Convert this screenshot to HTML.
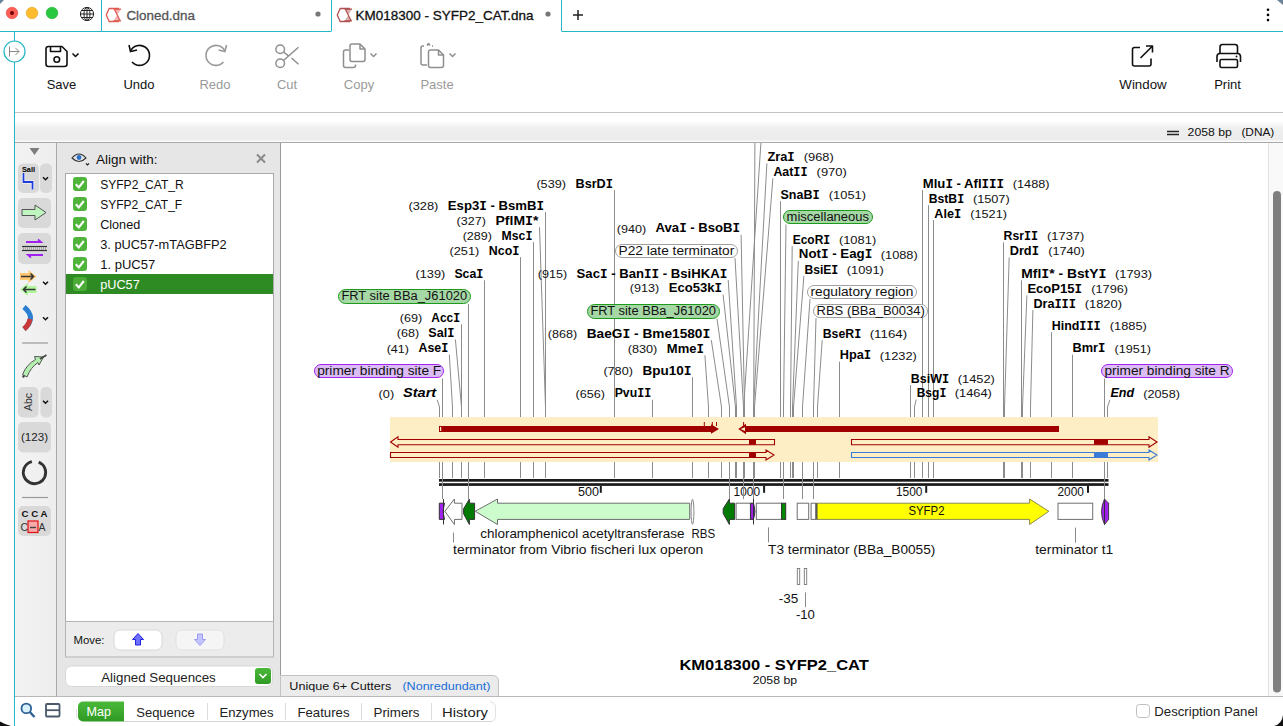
<!DOCTYPE html>
<html><head><meta charset="utf-8"><style>
html,body{margin:0;padding:0;width:1283px;height:726px;overflow:hidden;background:#fff}
svg{display:block}
text{font-family:"Liberation Sans",sans-serif}
</style></head><body>
<svg width="1283" height="726" viewBox="0 0 1283 726">
<rect x="0.00" y="0.00" width="1283.00" height="726.00" fill="#ffffff" stroke="none" stroke-width="1" rx="0"/>
<defs><linearGradient id="gs" x1="0" y1="0" x2="0" y2="1"><stop offset="0" stop-color="#ffffff"/><stop offset="0.27" stop-color="#ffffff"/><stop offset="0.5" stop-color="#efefef"/><stop offset="0.9" stop-color="#ececec"/><stop offset="0.93" stop-color="#fafafa"/><stop offset="1" stop-color="#f6f6f6"/></linearGradient><linearGradient id="gl" x1="0" y1="0" x2="1" y2="0"><stop offset="0" stop-color="#f3f3f3"/><stop offset="1" stop-color="#eeeeee"/></linearGradient><linearGradient id="gg" x1="0" y1="0" x2="0" y2="1"><stop offset="0" stop-color="#4cb83a"/><stop offset="1" stop-color="#2f9a23"/></linearGradient></defs>
<rect x="15.00" y="113.00" width="1268.00" height="30.00" fill="url(#gs)" stroke="none" stroke-width="1" rx="0"/>
<line x1="15.00" y1="112.50" x2="1283.00" y2="112.50" stroke="#c4c4c4" stroke-width="1"/>
<line x1="15.00" y1="142.50" x2="1283.00" y2="142.50" stroke="#a9a9a9" stroke-width="1"/>
<rect x="15.00" y="143.00" width="41.00" height="553.00" fill="url(#gl)" stroke="none" stroke-width="1" rx="0"/>
<line x1="56.50" y1="143.00" x2="56.50" y2="696.00" stroke="#a8a8a8" stroke-width="1"/>
<line x1="57.50" y1="143.00" x2="57.50" y2="696.00" stroke="#f0f0f0" stroke-width="1"/>
<rect x="57.00" y="143.00" width="223.00" height="553.00" fill="#e6e6e6" stroke="none" stroke-width="1" rx="0"/>
<line x1="280.50" y1="143.00" x2="280.50" y2="696.00" stroke="#9a9a9a" stroke-width="1"/>
<rect x="281.00" y="143.00" width="988.00" height="553.00" fill="#ffffff" stroke="none" stroke-width="1" rx="0"/>
<rect x="1269.00" y="143.00" width="14.00" height="553.00" fill="#f9f9f9" stroke="none" stroke-width="1" rx="0"/>
<line x1="1268.50" y1="143.00" x2="1268.50" y2="696.00" stroke="#e2e2e2" stroke-width="1"/>
<rect x="1273.00" y="191.00" width="8.00" height="501.50" fill="#7f7f7f" stroke="none" stroke-width="1" rx="4"/>
<line x1="15.00" y1="696.50" x2="1283.00" y2="696.50" stroke="#b8b8b8" stroke-width="1"/>
<circle cx="12" cy="13" r="5.8" fill="#ff5f57" stroke="#e0443e" stroke-width="0.6"/>
<circle cx="32" cy="13" r="5.8" fill="#febc2e" stroke="#dea123" stroke-width="0.6"/>
<circle cx="52" cy="13" r="5.8" fill="#28c840" stroke="#1aab29" stroke-width="0.6"/>
<circle cx="12" cy="13" r="2" fill="#6b0000"/>
<g transform="translate(87,14)" fill="none" stroke="#222" stroke-width="1"><circle r="6.6"/><ellipse rx="3" ry="6.6"/><line x1="-6.6" y1="0" x2="6.6" y2="0"/><line x1="-5.6" y1="-3.5" x2="5.6" y2="-3.5"/><line x1="-5.6" y1="3.5" x2="5.6" y2="3.5"/><line x1="0" y1="-6.6" x2="0" y2="6.6"/></g>
<line x1="101.50" y1="0.00" x2="101.50" y2="31.00" stroke="#25b7c6" stroke-width="1"/>
<line x1="331.50" y1="0.00" x2="331.50" y2="31.00" stroke="#25b7c6" stroke-width="1"/>
<line x1="561.50" y1="0.00" x2="561.50" y2="31.00" stroke="#25b7c6" stroke-width="1"/>
<line x1="0.00" y1="31.50" x2="331.50" y2="31.50" stroke="#25b7c6" stroke-width="1"/>
<line x1="561.50" y1="31.50" x2="1283.00" y2="31.50" stroke="#25b7c6" stroke-width="1"/>
<g transform="translate(106,8)"><path d="M13,0.5 H3.2 L0.3,7 L3.2,13.5 H13" fill="none" stroke="#e05a52" stroke-width="1.3"/><path d="M7.5,1 H15 L11.3,7 L15,13 H7.5 L11.2,7 Z" fill="#e05a52" opacity="0.45"/><path d="M7.5,1.2 H15 M7.5,12.8 H15 M8.5,1.5 L14,12.5" stroke="#e05a52" stroke-width="1.2"/></g>
<text x="126.4" y="20.0" font-size="13" fill="#555" textLength="68.5" lengthAdjust="spacingAndGlyphs" stroke="#555" stroke-width="0.3">Cloned.dna</text>
<circle cx="318" cy="14" r="2.6" fill="#777"/>
<g transform="translate(337,8)"><path d="M13,0.5 H3.2 L0.3,7 L3.2,13.5 H13" fill="none" stroke="#b05050" stroke-width="1.3"/><path d="M7.5,1 H15 L11.3,7 L15,13 H7.5 L11.2,7 Z" fill="#b05050" opacity="0.45"/><path d="M7.5,1.2 H15 M7.5,12.8 H15 M8.5,1.5 L14,12.5" stroke="#b05050" stroke-width="1.2"/></g>
<text x="355.6" y="20.0" font-size="13" fill="#111" textLength="178.0" lengthAdjust="spacingAndGlyphs" stroke="#111" stroke-width="0.3">KM018300 - SYFP2_CAT.dna</text>
<circle cx="548" cy="14" r="2.6" fill="#777"/>
<line x1="573.00" y1="15.00" x2="583.00" y2="15.00" stroke="#222" stroke-width="1.5"/>
<line x1="578.00" y1="10.00" x2="578.00" y2="20.00" stroke="#222" stroke-width="1.5"/>
<circle cx="1268" cy="9.8" r="1.3" fill="#000"/>
<circle cx="1268" cy="14.9" r="1.3" fill="#000"/>
<circle cx="1268" cy="20.1" r="1.3" fill="#000"/>
<polygon points="0.00,0.00 4.00,0.00 0.00,4.00" fill="#6a8396" stroke="none" stroke-width="1"/>
<polygon points="1277.00,0.00 1283.00,0.00 1283.00,5.00" fill="#6a8396" stroke="none" stroke-width="1"/>
<line x1="14.50" y1="31.00" x2="14.50" y2="726.00" stroke="#25b7c6" stroke-width="1"/>
<circle cx="14.5" cy="51.5" r="10.5" fill="#fff" stroke="#25b7c6" stroke-width="1.2"/>
<path d="M9.5,46.5 L9.5,56.5 M10,51.5 L19,51.5 M15.5,48 L19,51.5 L15.5,55" fill="none" stroke="#888" stroke-width="1"/>
<g fill="none" stroke="#111" stroke-width="1.6" stroke-linejoin="round"><path d="M48.5,46.5 h13.5 l5,5 v12.5 a2.5,2.5 0 0 1 -2.5,2.5 h-16 a2.5,2.5 0 0 1 -2.5,-2.5 v-15 a2.5,2.5 0 0 1 2.5,-2.5 z"/><path d="M50.5,46.5 v5 h10 v-5"/><circle cx="56.8" cy="59.5" r="2.8"/><path d="M72.5,53.5 l3,3 l3,-3"/></g>
<text x="61.5" y="89.0" font-size="13" text-anchor="middle" fill="#111">Save</text>
<g fill="none" stroke="#111" stroke-width="1.6"><path d="M130.5,51 A10,10 0 1 1 132,62"/><path d="M129,45 L130.5,51.5 L137,50"/></g>
<text x="139.0" y="89.0" font-size="13" text-anchor="middle" fill="#111">Undo</text>
<g fill="none" stroke="#9a9a9a" stroke-width="1.6"><path d="M225,51 A10,10 0 1 0 223.5,62"/><path d="M226.5,45 L225,51.5 L218.5,50"/></g>
<text x="215.0" y="89.0" font-size="13" text-anchor="middle" fill="#9a9a9a">Redo</text>
<g fill="none" stroke="#8e8e8e" stroke-width="1.5"><circle cx="280.2" cy="49.2" r="4.3"/><circle cx="280.2" cy="63.2" r="4.3"/><path d="M283.5,60.5 L298.5,47.3 M283.5,52 L288.5,55.8 M291.5,58 L298.5,64.3"/></g>
<text x="287.0" y="89.0" font-size="13" text-anchor="middle" fill="#9a9a9a">Cut</text>
<g fill="none" stroke="#8e8e8e" stroke-width="1.5" stroke-linejoin="round"><path d="M349,50 h-3.5 a2,2 0 0 0 -2,2 v13.5 a2,2 0 0 0 2,2 h8 a2,2 0 0 0 2,-2 v-1"/><path d="M352,44 h8 l5,5 v10.5 a2,2 0 0 1 -2,2 h-11 a2,2 0 0 1 -2,-2 v-13.5 a2,2 0 0 1 2,-2 z"/><path d="M360,44 v5 h5"/><path d="M370.5,53.5 l3,3 l3,-3"/></g>
<text x="359.0" y="89.0" font-size="13" text-anchor="middle" fill="#9a9a9a">Copy</text>
<g fill="none" stroke="#8e8e8e" stroke-width="1.5" stroke-linejoin="round"><path d="M424,46 h-1 a2,2 0 0 0 -2,2 v15 a2,2 0 0 0 2,2 h4"/><path d="M427,45.5 l1.5,-2 l1.5,2 M432,46 h1"/><path d="M430.5,50 h8 l5,5 v10.5 a2,2 0 0 1 -2,2 h-11 a2,2 0 0 1 -2,-2 v-13.5 a2,2 0 0 1 2,-2 z"/><path d="M438.5,50 v5 h5"/><path d="M449.5,53.5 l3,3 l3,-3"/></g>
<text x="437.0" y="89.0" font-size="13" text-anchor="middle" fill="#9a9a9a">Paste</text>
<g fill="none" stroke="#111" stroke-width="1.6" stroke-linejoin="round"><path d="M1140,47.5 h-5.5 a2,2 0 0 0 -2,2 v14.5 a2,2 0 0 0 2,2 h14.5 a2,2 0 0 0 2,-2 v-5.5"/><path d="M1140.5,58 L1152.5,46 M1146,46 h6.5 v6.5"/></g>
<text x="1143.0" y="89.0" font-size="13" text-anchor="middle" fill="#111" textLength="47.3" lengthAdjust="spacingAndGlyphs">Window</text>
<g fill="none" stroke="#111" stroke-width="1.6" stroke-linejoin="round"><path d="M1220,53 v-6 a2.5,2.5 0 0 1 2.5,-2.5 h12.5 a2.5,2.5 0 0 1 2.5,2.5 v6"/><path d="M1217,62 v-5.5 a3,3 0 0 1 3,-3 h17.5 a3,3 0 0 1 3,3 v5.5"/><rect x="1220" y="59.5" width="17.5" height="8" rx="1.5"/></g>
<circle cx="1236.5" cy="56.5" r="0.9" fill="#111"/>
<text x="1227.5" y="89.0" font-size="13" text-anchor="middle" fill="#111">Print</text>
<line x1="1167.00" y1="131.50" x2="1179.00" y2="131.50" stroke="#222" stroke-width="1.5"/>
<line x1="1167.00" y1="134.50" x2="1179.00" y2="134.50" stroke="#222" stroke-width="1.5"/>
<text x="1187.6" y="136.0" font-size="11.8" fill="#111" textLength="44.3" lengthAdjust="spacingAndGlyphs">2058 bp</text>
<text x="1241.4" y="136.0" font-size="11.8" fill="#111" textLength="32.9" lengthAdjust="spacingAndGlyphs">(DNA)</text>
<polygon points="29.50,148.00 39.50,148.00 34.50,155.00" fill="#7d7d7d" stroke="none" stroke-width="1"/>
<rect x="18.00" y="163.50" width="21.00" height="29.50" fill="#d9d9d9" stroke="none" stroke-width="1" rx="5"/>
<rect x="40.00" y="163.50" width="12.00" height="29.50" fill="#d9d9d9" stroke="none" stroke-width="1" rx="5"/>
<rect x="18.00" y="198.00" width="33.00" height="30.00" fill="#d9d9d9" stroke="none" stroke-width="1" rx="5"/>
<rect x="18.00" y="233.00" width="33.00" height="31.00" fill="#d9d9d9" stroke="none" stroke-width="1" rx="5"/>
<rect x="18.00" y="387.00" width="20.50" height="30.50" fill="#d9d9d9" stroke="none" stroke-width="1" rx="5"/>
<rect x="40.50" y="387.00" width="11.50" height="30.50" fill="#d9d9d9" stroke="none" stroke-width="1" rx="5"/>
<rect x="18.00" y="422.00" width="33.00" height="30.50" fill="#d9d9d9" stroke="none" stroke-width="1" rx="5"/>
<rect x="18.00" y="506.00" width="33.00" height="30.00" fill="#d9d9d9" stroke="none" stroke-width="1" rx="5"/>
<path d="M43.0,177.3 L45.5,179.8 L48.0,177.3" fill="none" stroke="#111" stroke-width="1.5"/>
<path d="M43.0,281.8 L45.5,284.3 L48.0,281.8" fill="none" stroke="#111" stroke-width="1.5"/>
<path d="M43.0,317.3 L45.5,319.8 L48.0,317.3" fill="none" stroke="#111" stroke-width="1.5"/>
<path d="M43.0,400.8 L45.5,403.3 L48.0,400.8" fill="none" stroke="#111" stroke-width="1.5"/>
<text x="28.5" y="171.5" font-size="7.5" font-weight="bold" text-anchor="middle" fill="#000" textLength="13.0" lengthAdjust="spacingAndGlyphs">SalI</text>
<path d="M23.5,173 V182 H32.5 V189.5" fill="none" stroke="#fff" stroke-width="3.2"/>
<path d="M23.5,173 V182 H32.5 V189.5" fill="none" stroke="#1d3ddc" stroke-width="1.8"/>
<polygon points="22.00,209.50 35.00,209.50 35.00,205.00 46.00,212.50 35.00,220.00 35.00,215.50 22.00,215.50" fill="#bff5bf" stroke="#555" stroke-width="1"/>
<line x1="22.00" y1="246.50" x2="47.00" y2="246.50" stroke="#333" stroke-width="1.2"/>
<line x1="22.00" y1="250.50" x2="47.00" y2="250.50" stroke="#333" stroke-width="1.2"/>
<line x1="23.50" y1="247.00" x2="23.50" y2="250.00" stroke="#999" stroke-width="0.8"/>
<line x1="25.50" y1="247.00" x2="25.50" y2="250.00" stroke="#999" stroke-width="0.8"/>
<line x1="27.50" y1="247.00" x2="27.50" y2="250.00" stroke="#999" stroke-width="0.8"/>
<line x1="29.50" y1="247.00" x2="29.50" y2="250.00" stroke="#999" stroke-width="0.8"/>
<line x1="31.50" y1="247.00" x2="31.50" y2="250.00" stroke="#999" stroke-width="0.8"/>
<line x1="33.50" y1="247.00" x2="33.50" y2="250.00" stroke="#999" stroke-width="0.8"/>
<line x1="35.50" y1="247.00" x2="35.50" y2="250.00" stroke="#999" stroke-width="0.8"/>
<line x1="37.50" y1="247.00" x2="37.50" y2="250.00" stroke="#999" stroke-width="0.8"/>
<line x1="39.50" y1="247.00" x2="39.50" y2="250.00" stroke="#999" stroke-width="0.8"/>
<line x1="41.50" y1="247.00" x2="41.50" y2="250.00" stroke="#999" stroke-width="0.8"/>
<line x1="43.50" y1="247.00" x2="43.50" y2="250.00" stroke="#999" stroke-width="0.8"/>
<line x1="45.50" y1="247.00" x2="45.50" y2="250.00" stroke="#999" stroke-width="0.8"/>
<path d="M26,242 H41 L38,239.5" fill="none" stroke="#a020f0" stroke-width="1.8"/>
<path d="M43,255 H28 L31,257.5" fill="none" stroke="#a020f0" stroke-width="1.8"/>
<polygon points="20.00,273.00 28.50,273.00 28.50,270.00 36.50,276.50 28.50,283.00 28.50,280.00 20.00,280.00" fill="#ffc870" stroke="none" stroke-width="1"/>
<path d="M21,276.5 H33 M30.5,273.5 L33.5,276.5 L30.5,279.5" fill="none" stroke="#333" stroke-width="1.5"/>
<polygon points="36.50,286.00 28.00,286.00 28.00,283.00 20.00,289.50 28.00,296.00 28.00,293.00 36.50,293.00" fill="#b0f59c" stroke="none" stroke-width="1"/>
<path d="M35.5,289.5 H23.5 M26.5,286.5 L23.5,289.5 L26.5,292.5" fill="none" stroke="#333" stroke-width="1.5"/>
<path d="M24,307 Q37,318 24,329" fill="none" stroke="#2a7fd0" stroke-width="5"/>
<path d="M30,319 Q29,325 24,329" fill="none" stroke="#c83a3a" stroke-width="5"/>
<line x1="22.00" y1="343.00" x2="48.00" y2="343.00" stroke="#9a9a9a" stroke-width="1.2"/>
<path d="M23,377.5 L24.5,374" fill="none" stroke="#444" stroke-width="2.2"/>
<path d="M22.5,374.5 Q26.5,364.5 35.5,359.5 L34.5,356.5 L43.5,357 L39,365 L38,362.5 Q30.5,367.5 27,377 Z" fill="#b5efb0" stroke="#555" stroke-width="1"/>
<path d="M40,359 L46.5,355" fill="none" stroke="#444" stroke-width="1.6"/>
<text x="0" y="0" font-size="10.5" fill="#333" textLength="18" lengthAdjust="spacingAndGlyphs" transform="translate(32,402) rotate(-90)" text-anchor="middle">Abc</text>
<text x="34.5" y="441.0" font-size="10" text-anchor="middle" fill="#222" textLength="27.0" lengthAdjust="spacingAndGlyphs">(123)</text>
<circle cx="34.5" cy="472.5" r="11.2" fill="none" stroke="#333" stroke-width="2.8" stroke-dasharray="63 8" transform="rotate(-68 34.5 472.5)"/>
<line x1="22.00" y1="497.50" x2="48.00" y2="497.50" stroke="#9a9a9a" stroke-width="1.2"/>
<text x="34.5" y="517.0" font-size="9" font-weight="bold" text-anchor="middle" fill="#111" textLength="26.0" lengthAdjust="spacingAndGlyphs">C C A</text>
<text x="20.5" y="531.0" font-size="10.5" fill="#333">C</text>
<text x="38.5" y="531.0" font-size="10.5" fill="#333">A</text>
<rect x="28.00" y="521.00" width="10.00" height="11.50" fill="#f5a9a9" stroke="#e01010" stroke-width="1.2" rx="0"/>
<line x1="30.00" y1="527.50" x2="36.00" y2="527.50" stroke="#444" stroke-width="1.4"/>
<path d="M72,158 Q79,150 86,158 Q79,165 72,158 Z" fill="none" stroke="#333" stroke-width="1.1"/>
<circle cx="79" cy="157.5" r="2.4" fill="#2a70c8"/>
<path d="M86,163.5 l1.5,1.5 l1.5,-1.5" fill="none" stroke="#222" stroke-width="1.1"/>
<text x="96.0" y="163.5" font-size="13" fill="#111" textLength="61.5" lengthAdjust="spacingAndGlyphs">Align with:</text>
<path d="M257,154.5 L265,162.5 M265,154.5 L257,162.5" fill="none" stroke="#8a8a8a" stroke-width="2"/>
<rect x="65.50" y="173.50" width="208.00" height="448.00" fill="#ffffff" stroke="#a9a9a9" stroke-width="1" rx="0"/>
<rect x="73.00" y="177.00" width="14.00" height="14.00" fill="#4fb43a" stroke="none" stroke-width="1" rx="3"/>
<path d="M75.8,184.2 l3,3.2 l5,-6.4" fill="none" stroke="#fff" stroke-width="2.1"/>
<text x="100.2" y="189.0" font-size="13" fill="#111" textLength="83.5" lengthAdjust="spacingAndGlyphs">SYFP2_CAT_R</text>
<rect x="73.00" y="197.00" width="14.00" height="14.00" fill="#4fb43a" stroke="none" stroke-width="1" rx="3"/>
<path d="M75.8,204.2 l3,3.2 l5,-6.4" fill="none" stroke="#fff" stroke-width="2.1"/>
<text x="100.2" y="209.0" font-size="13" fill="#111" textLength="82.0" lengthAdjust="spacingAndGlyphs">SYFP2_CAT_F</text>
<rect x="73.00" y="217.00" width="14.00" height="14.00" fill="#4fb43a" stroke="none" stroke-width="1" rx="3"/>
<path d="M75.8,224.2 l3,3.2 l5,-6.4" fill="none" stroke="#fff" stroke-width="2.1"/>
<text x="100.2" y="229.0" font-size="13" fill="#111" textLength="40.0" lengthAdjust="spacingAndGlyphs">Cloned</text>
<rect x="73.00" y="237.00" width="14.00" height="14.00" fill="#4fb43a" stroke="none" stroke-width="1" rx="3"/>
<path d="M75.8,244.2 l3,3.2 l5,-6.4" fill="none" stroke="#fff" stroke-width="2.1"/>
<text x="100.2" y="249.0" font-size="13" fill="#111" textLength="126.5" lengthAdjust="spacingAndGlyphs">3. pUC57-mTAGBFP2</text>
<rect x="73.00" y="257.00" width="14.00" height="14.00" fill="#4fb43a" stroke="none" stroke-width="1" rx="3"/>
<path d="M75.8,264.2 l3,3.2 l5,-6.4" fill="none" stroke="#fff" stroke-width="2.1"/>
<text x="100.2" y="269.0" font-size="13" fill="#111" textLength="55.0" lengthAdjust="spacingAndGlyphs">1. pUC57</text>
<rect x="66.00" y="274.00" width="207.00" height="20.00" fill="#2e8b24" stroke="none" stroke-width="1" rx="0"/>
<rect x="73.00" y="277.00" width="14.00" height="14.00" fill="#4aac36" stroke="none" stroke-width="1" rx="3"/>
<path d="M75.8,284.2 l3,3.2 l5,-6.4" fill="none" stroke="#fff" stroke-width="2.1"/>
<text x="100.2" y="289.0" font-size="13" fill="#fff" textLength="39.5" lengthAdjust="spacingAndGlyphs">pUC57</text>
<rect x="65.50" y="621.50" width="208.00" height="35.50" fill="#ececec" stroke="#b5b5b5" stroke-width="1" rx="0"/>
<text x="73.5" y="644.0" font-size="11.5" fill="#111" textLength="31.0" lengthAdjust="spacingAndGlyphs">Move:</text>
<rect x="114.00" y="630.00" width="48.00" height="20.00" fill="#ffffff" stroke="#d0d0d0" stroke-width="0.8" rx="6"/>
<rect x="176.00" y="630.00" width="48.00" height="20.00" fill="#f5f5f5" stroke="#dcdcdc" stroke-width="0.8" rx="6"/>
<polygon points="138.00,633.50 143.50,639.50 140.50,639.50 140.50,645.00 135.50,645.00 135.50,639.50 132.50,639.50" fill="#6f6fff" stroke="#2020e0" stroke-width="1"/>
<polygon points="200.00,645.50 205.50,639.50 202.50,639.50 202.50,634.00 197.50,634.00 197.50,639.50 194.50,639.50" fill="#c4c4ff" stroke="#9a9af5" stroke-width="1"/>
<rect x="65.50" y="666.00" width="207.00" height="20.50" fill="#ffffff" stroke="#d0d0d0" stroke-width="0.8" rx="6"/>
<text x="158.5" y="682.0" font-size="13" text-anchor="middle" fill="#222" textLength="114.5" lengthAdjust="spacingAndGlyphs">Aligned Sequences</text>
<rect x="255.00" y="668.00" width="16.00" height="16.00" fill="url(#gg)" stroke="none" stroke-width="1" rx="3"/>
<path d="M259.5,674 l3.5,3.5 l3.5,-3.5" fill="none" stroke="#fff" stroke-width="1.6"/>
<g stroke="#2b5f95" stroke-width="1.8"><circle cx="26.3" cy="708.4" r="4.8" fill="#d9f1fb"/><path d="M29.8,712 L34.5,717" stroke-width="2.4"/></g>
<g fill="none" stroke="#4a5a6a" stroke-width="1.8"><rect x="46" y="704" width="13.5" height="12.5" rx="1"/><path d="M46,710.2 H59.5"/></g>
<line x1="124.00" y1="721.50" x2="492.00" y2="721.50" stroke="#d4d4d4" stroke-width="1"/>
<path d="M490,702 a5,5 0 0 1 5.5,5 V716.5 a5,5 0 0 1 -5.5,5" fill="none" stroke="#dadada" stroke-width="0.8"/>
<line x1="76.50" y1="708.00" x2="76.50" y2="718.00" stroke="#e6e6e6" stroke-width="1"/>
<path d="M83,701.5 H124 V721.5 H83 a5,5 0 0 1 -5,-5 V706.5 a5,5 0 0 1 5,-5 z" fill="url(#gg)"/>
<text x="86.6" y="716.0" font-size="13" fill="#fff" textLength="24.5" lengthAdjust="spacingAndGlyphs">Map</text>
<line x1="207.50" y1="703.00" x2="207.50" y2="720.00" stroke="#dcdcdc" stroke-width="1"/>
<line x1="285.50" y1="703.00" x2="285.50" y2="720.00" stroke="#dcdcdc" stroke-width="1"/>
<line x1="361.50" y1="703.00" x2="361.50" y2="720.00" stroke="#dcdcdc" stroke-width="1"/>
<line x1="431.50" y1="703.00" x2="431.50" y2="720.00" stroke="#dcdcdc" stroke-width="1"/>
<text x="165.5" y="717.0" font-size="13" text-anchor="middle" fill="#222" textLength="58.5" lengthAdjust="spacingAndGlyphs">Sequence</text>
<text x="246.5" y="717.0" font-size="13" text-anchor="middle" fill="#222" textLength="54.0" lengthAdjust="spacingAndGlyphs">Enzymes</text>
<text x="323.5" y="717.0" font-size="13" text-anchor="middle" fill="#222" textLength="52.0" lengthAdjust="spacingAndGlyphs">Features</text>
<text x="396.5" y="717.0" font-size="13" text-anchor="middle" fill="#222" textLength="46.0" lengthAdjust="spacingAndGlyphs">Primers</text>
<text x="465.0" y="717.0" font-size="13" text-anchor="middle" fill="#222" textLength="46.0" lengthAdjust="spacingAndGlyphs">History</text>
<rect x="1136.50" y="704.50" width="13.00" height="13.00" fill="#ffffff" stroke="#b8b8b8" stroke-width="0.9" rx="3"/>
<text x="1154.3" y="716.2" font-size="13" fill="#222" textLength="103.4" lengthAdjust="spacingAndGlyphs">Description Panel</text>
<path d="M0,721.5 Q4,724 11,726 H0 Z" fill="#111" stroke="none" stroke-width="0"/>
<path d="M1274,726 Q1282,724 1283,715 V726 Z" fill="#111" stroke="none" stroke-width="0"/>
<line x1="614.50" y1="190.20" x2="614.50" y2="478.00" stroke="#8c8c8c" stroke-width="1"/>
<line x1="545.50" y1="212.10" x2="545.50" y2="478.00" stroke="#8c8c8c" stroke-width="1"/>
<polyline points="539.50,227.30 545.50,407 545.50,478" fill="none" stroke="#8c8c8c" stroke-width="1"/>
<line x1="533.50" y1="242.10" x2="533.50" y2="478.00" stroke="#8c8c8c" stroke-width="1"/>
<line x1="520.50" y1="257.10" x2="520.50" y2="478.00" stroke="#8c8c8c" stroke-width="1"/>
<line x1="484.50" y1="280.30" x2="484.50" y2="478.00" stroke="#8c8c8c" stroke-width="1"/>
<line x1="461.50" y1="324.30" x2="461.50" y2="478.00" stroke="#8c8c8c" stroke-width="1"/>
<polyline points="455.40,339.50 461.50,407 461.50,478" fill="none" stroke="#8c8c8c" stroke-width="1"/>
<polyline points="449.30,354.70 452.50,407 452.50,478" fill="none" stroke="#8c8c8c" stroke-width="1"/>
<polyline points="437.20,399.80 439.50,407 439.50,478" fill="none" stroke="#8c8c8c" stroke-width="1"/>
<polyline points="741.10,234.80 744.50,407 744.50,478" fill="none" stroke="#8c8c8c" stroke-width="1"/>
<polyline points="728.20,280.00 736.50,407 736.50,478" fill="none" stroke="#8c8c8c" stroke-width="1"/>
<polyline points="723.10,294.60 735.50,407 735.50,478" fill="none" stroke="#8c8c8c" stroke-width="1"/>
<polyline points="711.30,340.10 721.50,407 721.50,478" fill="none" stroke="#8c8c8c" stroke-width="1"/>
<polyline points="704.90,355.30 708.50,407 708.50,478" fill="none" stroke="#8c8c8c" stroke-width="1"/>
<line x1="692.50" y1="377.10" x2="692.50" y2="478.00" stroke="#8c8c8c" stroke-width="1"/>
<line x1="652.50" y1="399.80" x2="652.50" y2="478.00" stroke="#8c8c8c" stroke-width="1"/>
<polyline points="766.90,163.30 753.50,407 753.50,478" fill="none" stroke="#8c8c8c" stroke-width="1"/>
<polyline points="772.90,178.30 754.50,407 754.50,478" fill="none" stroke="#8c8c8c" stroke-width="1"/>
<line x1="780.50" y1="201.20" x2="780.50" y2="478.00" stroke="#8c8c8c" stroke-width="1"/>
<polyline points="792.20,246.10 790.50,407 790.50,478" fill="none" stroke="#8c8c8c" stroke-width="1"/>
<polyline points="798.30,260.90 792.50,407 792.50,478" fill="none" stroke="#8c8c8c" stroke-width="1"/>
<polyline points="803.90,276.10 793.50,407 793.50,478" fill="none" stroke="#8c8c8c" stroke-width="1"/>
<polyline points="822.20,340.20 817.50,407 817.50,478" fill="none" stroke="#8c8c8c" stroke-width="1"/>
<line x1="839.50" y1="361.70" x2="839.50" y2="478.00" stroke="#8c8c8c" stroke-width="1"/>
<line x1="910.50" y1="385.00" x2="910.50" y2="478.00" stroke="#8c8c8c" stroke-width="1"/>
<polyline points="916.20,399.60 914.50,407 914.50,478" fill="none" stroke="#8c8c8c" stroke-width="1"/>
<line x1="922.50" y1="190.00" x2="922.50" y2="478.00" stroke="#8c8c8c" stroke-width="1"/>
<line x1="928.50" y1="205.20" x2="928.50" y2="478.00" stroke="#8c8c8c" stroke-width="1"/>
<line x1="933.50" y1="220.10" x2="933.50" y2="478.00" stroke="#8c8c8c" stroke-width="1"/>
<line x1="1003.50" y1="242.30" x2="1003.50" y2="478.00" stroke="#8c8c8c" stroke-width="1"/>
<polyline points="1009.20,257.30 1004.50,407 1004.50,478" fill="none" stroke="#8c8c8c" stroke-width="1"/>
<line x1="1021.50" y1="280.30" x2="1021.50" y2="478.00" stroke="#8c8c8c" stroke-width="1"/>
<polyline points="1026.90,295.30 1022.50,407 1022.50,478" fill="none" stroke="#8c8c8c" stroke-width="1"/>
<polyline points="1032.90,310.10 1030.50,407 1030.50,478" fill="none" stroke="#8c8c8c" stroke-width="1"/>
<line x1="1051.50" y1="332.00" x2="1051.50" y2="478.00" stroke="#8c8c8c" stroke-width="1"/>
<line x1="1072.50" y1="354.70" x2="1072.50" y2="478.00" stroke="#8c8c8c" stroke-width="1"/>
<polyline points="1109.90,399.80 1107.50,407 1107.50,478" fill="none" stroke="#8c8c8c" stroke-width="1"/>
<line x1="468.50" y1="303.80" x2="468.50" y2="499.00" stroke="#8c8c8c" stroke-width="1"/>
<line x1="442.50" y1="378.50" x2="442.50" y2="499.00" stroke="#8c8c8c" stroke-width="1"/>
<polyline points="735.00,258.20 743.50,407 743.50,499" fill="none" stroke="#8c8c8c" stroke-width="1"/>
<polyline points="717.00,318.70 729.50,407 729.50,499" fill="none" stroke="#8c8c8c" stroke-width="1"/>
<polyline points="786.00,224.50 783.50,407 783.50,499" fill="none" stroke="#8c8c8c" stroke-width="1"/>
<polyline points="810.00,299.00 802.50,407 802.50,499" fill="none" stroke="#8c8c8c" stroke-width="1"/>
<polyline points="816.00,318.20 813.50,407 813.50,499" fill="none" stroke="#8c8c8c" stroke-width="1"/>
<line x1="1104.50" y1="378.50" x2="1104.50" y2="499.00" stroke="#8c8c8c" stroke-width="1"/>
<polyline points="754.9,143 753.7,407 753.7,478" fill="none" stroke="#8c8c8c"/>
<polyline points="760.9,143 743.7,407 743.7,478" fill="none" stroke="#8c8c8c"/>
<text x="536.4" y="188.0" font-size="11.4" fill="#111" textLength="29.6" lengthAdjust="spacingAndGlyphs">(539)</text>
<text x="575.5" y="187.7" font-size="12.8" font-weight="bold" fill="#000" textLength="37.5" lengthAdjust="spacingAndGlyphs">BsrD<tspan font-family="Liberation Mono" font-size="12.2">I</tspan></text>
<text x="408.4" y="209.9" font-size="11.4" fill="#111" textLength="30.0" lengthAdjust="spacingAndGlyphs">(328)</text>
<text x="447.8" y="209.6" font-size="12.8" font-weight="bold" fill="#000" textLength="96.3" lengthAdjust="spacingAndGlyphs">Esp3<tspan font-family="Liberation Mono" font-size="12.2">I</tspan> - BsmB<tspan font-family="Liberation Mono" font-size="12.2">I</tspan></text>
<text x="456.6" y="225.1" font-size="11.4" fill="#111" textLength="29.2" lengthAdjust="spacingAndGlyphs">(327)</text>
<text x="495.5" y="224.8" font-size="12.8" font-weight="bold" fill="#000" textLength="43.0" lengthAdjust="spacingAndGlyphs">PflM<tspan font-family="Liberation Mono" font-size="12.2">I</tspan>*</text>
<text x="462.7" y="239.9" font-size="11.4" fill="#111" textLength="29.2" lengthAdjust="spacingAndGlyphs">(289)</text>
<text x="501.6" y="239.6" font-size="12.8" font-weight="bold" fill="#000" textLength="30.8" lengthAdjust="spacingAndGlyphs">Msc<tspan font-family="Liberation Mono" font-size="12.2">I</tspan></text>
<text x="449.5" y="254.9" font-size="11.4" fill="#111" textLength="29.8" lengthAdjust="spacingAndGlyphs">(251)</text>
<text x="488.8" y="254.6" font-size="12.8" font-weight="bold" fill="#000" textLength="30.6" lengthAdjust="spacingAndGlyphs">Nco<tspan font-family="Liberation Mono" font-size="12.2">I</tspan></text>
<text x="415.5" y="278.1" font-size="11.4" fill="#111" textLength="29.8" lengthAdjust="spacingAndGlyphs">(139)</text>
<text x="454.4" y="277.8" font-size="12.8" font-weight="bold" fill="#000" textLength="29.0" lengthAdjust="spacingAndGlyphs">Sca<tspan font-family="Liberation Mono" font-size="12.2">I</tspan></text>
<text x="399.7" y="322.1" font-size="11.4" fill="#111" textLength="22.5" lengthAdjust="spacingAndGlyphs">(69)</text>
<text x="431.3" y="321.8" font-size="12.8" font-weight="bold" fill="#000" textLength="28.8" lengthAdjust="spacingAndGlyphs">Acc<tspan font-family="Liberation Mono" font-size="12.2">I</tspan></text>
<text x="396.7" y="337.3" font-size="11.4" fill="#111" textLength="22.4" lengthAdjust="spacingAndGlyphs">(68)</text>
<text x="428.3" y="337.0" font-size="12.8" font-weight="bold" fill="#000" textLength="26.1" lengthAdjust="spacingAndGlyphs">Sal<tspan font-family="Liberation Mono" font-size="12.2">I</tspan></text>
<text x="386.7" y="352.5" font-size="11.4" fill="#111" textLength="22.3" lengthAdjust="spacingAndGlyphs">(41)</text>
<text x="418.5" y="352.2" font-size="12.8" font-weight="bold" fill="#000" textLength="29.8" lengthAdjust="spacingAndGlyphs">Ase<tspan font-family="Liberation Mono" font-size="12.2">I</tspan></text>
<text x="378.6" y="397.6" font-size="11.4" fill="#111" textLength="15.6" lengthAdjust="spacingAndGlyphs">(0)</text>
<text x="403.0" y="397.3" font-size="12.8" font-weight="bold" font-style="italic" fill="#000" textLength="33.2" lengthAdjust="spacingAndGlyphs">Start</text>
<text x="616.7" y="232.6" font-size="11.4" fill="#111" textLength="29.4" lengthAdjust="spacingAndGlyphs">(940)</text>
<text x="655.6" y="232.3" font-size="12.8" font-weight="bold" fill="#000" textLength="84.5" lengthAdjust="spacingAndGlyphs">Ava<tspan font-family="Liberation Mono" font-size="12.2">I</tspan> - BsoB<tspan font-family="Liberation Mono" font-size="12.2">I</tspan></text>
<text x="537.7" y="277.8" font-size="11.4" fill="#111" textLength="29.4" lengthAdjust="spacingAndGlyphs">(915)</text>
<text x="576.6" y="277.5" font-size="12.8" font-weight="bold" fill="#000" textLength="150.6" lengthAdjust="spacingAndGlyphs">Sac<tspan font-family="Liberation Mono" font-size="12.2">I</tspan> - Ban<tspan font-family="Liberation Mono" font-size="12.2">II</tspan> - BsiHKA<tspan font-family="Liberation Mono" font-size="12.2">I</tspan></text>
<text x="629.7" y="292.4" font-size="11.4" fill="#111" textLength="29.4" lengthAdjust="spacingAndGlyphs">(913)</text>
<text x="668.8" y="292.1" font-size="12.8" font-weight="bold" fill="#000" textLength="53.3" lengthAdjust="spacingAndGlyphs">Eco53k<tspan font-family="Liberation Mono" font-size="12.2">I</tspan></text>
<text x="547.8" y="337.9" font-size="11.4" fill="#111" textLength="29.4" lengthAdjust="spacingAndGlyphs">(868)</text>
<text x="586.7" y="337.6" font-size="12.8" font-weight="bold" fill="#000" textLength="123.6" lengthAdjust="spacingAndGlyphs">BaeG<tspan font-family="Liberation Mono" font-size="12.2">I</tspan> - Bme1580<tspan font-family="Liberation Mono" font-size="12.2">I</tspan></text>
<text x="627.7" y="353.1" font-size="11.4" fill="#111" textLength="29.6" lengthAdjust="spacingAndGlyphs">(830)</text>
<text x="666.8" y="352.8" font-size="12.8" font-weight="bold" fill="#000" textLength="37.1" lengthAdjust="spacingAndGlyphs">Mme<tspan font-family="Liberation Mono" font-size="12.2">I</tspan></text>
<text x="603.4" y="374.9" font-size="11.4" fill="#111" textLength="29.5" lengthAdjust="spacingAndGlyphs">(780)</text>
<text x="642.5" y="374.6" font-size="12.8" font-weight="bold" fill="#000" textLength="49.0" lengthAdjust="spacingAndGlyphs">Bpu10<tspan font-family="Liberation Mono" font-size="12.2">I</tspan></text>
<text x="575.6" y="397.6" font-size="11.4" fill="#111" textLength="29.4" lengthAdjust="spacingAndGlyphs">(656)</text>
<text x="614.7" y="397.3" font-size="12.8" font-weight="bold" fill="#000" textLength="36.5" lengthAdjust="spacingAndGlyphs">Pvu<tspan font-family="Liberation Mono" font-size="12.2">II</tspan></text>
<text x="803.8" y="161.1" font-size="11.4" fill="#111" textLength="30.0" lengthAdjust="spacingAndGlyphs">(968)</text>
<text x="767.4" y="160.8" font-size="12.8" font-weight="bold" fill="#000" textLength="27.3" lengthAdjust="spacingAndGlyphs">Zra<tspan font-family="Liberation Mono" font-size="12.2">I</tspan></text>
<text x="816.6" y="176.1" font-size="11.4" fill="#111" textLength="30.2" lengthAdjust="spacingAndGlyphs">(970)</text>
<text x="773.4" y="175.8" font-size="12.8" font-weight="bold" fill="#000" textLength="34.1" lengthAdjust="spacingAndGlyphs">Aat<tspan font-family="Liberation Mono" font-size="12.2">II</tspan></text>
<text x="828.8" y="199.0" font-size="11.4" fill="#111" textLength="37.2" lengthAdjust="spacingAndGlyphs">(1051)</text>
<text x="780.5" y="198.7" font-size="12.8" font-weight="bold" fill="#000" textLength="39.1" lengthAdjust="spacingAndGlyphs">SnaB<tspan font-family="Liberation Mono" font-size="12.2">I</tspan></text>
<text x="838.9" y="243.9" font-size="11.4" fill="#111" textLength="37.3" lengthAdjust="spacingAndGlyphs">(1081)</text>
<text x="792.7" y="243.6" font-size="12.8" font-weight="bold" fill="#000" textLength="37.5" lengthAdjust="spacingAndGlyphs">EcoR<tspan font-family="Liberation Mono" font-size="12.2">I</tspan></text>
<text x="880.8" y="258.7" font-size="11.4" fill="#111" textLength="36.9" lengthAdjust="spacingAndGlyphs">(1088)</text>
<text x="798.8" y="258.4" font-size="12.8" font-weight="bold" fill="#000" textLength="73.5" lengthAdjust="spacingAndGlyphs">Not<tspan font-family="Liberation Mono" font-size="12.2">I</tspan> - Eag<tspan font-family="Liberation Mono" font-size="12.2">I</tspan></text>
<text x="846.8" y="273.9" font-size="11.4" fill="#111" textLength="37.1" lengthAdjust="spacingAndGlyphs">(1091)</text>
<text x="804.4" y="273.6" font-size="12.8" font-weight="bold" fill="#000" textLength="33.9" lengthAdjust="spacingAndGlyphs">BsiE<tspan font-family="Liberation Mono" font-size="12.2">I</tspan></text>
<text x="869.7" y="338.0" font-size="11.4" fill="#111" textLength="37.5" lengthAdjust="spacingAndGlyphs">(1164)</text>
<text x="822.7" y="337.7" font-size="12.8" font-weight="bold" fill="#000" textLength="38.5" lengthAdjust="spacingAndGlyphs">BseR<tspan font-family="Liberation Mono" font-size="12.2">I</tspan></text>
<text x="879.8" y="359.5" font-size="11.4" fill="#111" textLength="37.1" lengthAdjust="spacingAndGlyphs">(1232)</text>
<text x="839.7" y="359.2" font-size="12.8" font-weight="bold" fill="#000" textLength="31.4" lengthAdjust="spacingAndGlyphs">Hpa<tspan font-family="Liberation Mono" font-size="12.2">I</tspan></text>
<text x="957.8" y="382.8" font-size="11.4" fill="#111" textLength="37.1" lengthAdjust="spacingAndGlyphs">(1452)</text>
<text x="910.8" y="382.5" font-size="12.8" font-weight="bold" fill="#000" textLength="38.3" lengthAdjust="spacingAndGlyphs">BsiW<tspan font-family="Liberation Mono" font-size="12.2">I</tspan></text>
<text x="954.8" y="397.4" font-size="11.4" fill="#111" textLength="37.1" lengthAdjust="spacingAndGlyphs">(1464)</text>
<text x="916.7" y="397.1" font-size="12.8" font-weight="bold" fill="#000" textLength="29.6" lengthAdjust="spacingAndGlyphs">Bsg<tspan font-family="Liberation Mono" font-size="12.2">I</tspan></text>
<text x="1012.8" y="187.8" font-size="11.4" fill="#111" textLength="36.8" lengthAdjust="spacingAndGlyphs">(1488)</text>
<text x="922.8" y="187.5" font-size="12.8" font-weight="bold" fill="#000" textLength="81.3" lengthAdjust="spacingAndGlyphs">Mlu<tspan font-family="Liberation Mono" font-size="12.2">I</tspan> - Afl<tspan font-family="Liberation Mono" font-size="12.2">III</tspan></text>
<text x="972.9" y="203.0" font-size="11.4" fill="#111" textLength="36.8" lengthAdjust="spacingAndGlyphs">(1507)</text>
<text x="928.7" y="202.7" font-size="12.8" font-weight="bold" fill="#000" textLength="35.5" lengthAdjust="spacingAndGlyphs">BstB<tspan font-family="Liberation Mono" font-size="12.2">I</tspan></text>
<text x="970.2" y="217.9" font-size="11.4" fill="#111" textLength="36.8" lengthAdjust="spacingAndGlyphs">(1521)</text>
<text x="934.3" y="217.6" font-size="12.8" font-weight="bold" fill="#000" textLength="26.8" lengthAdjust="spacingAndGlyphs">Ale<tspan font-family="Liberation Mono" font-size="12.2">I</tspan></text>
<text x="1047.1" y="240.1" font-size="11.4" fill="#111" textLength="37.1" lengthAdjust="spacingAndGlyphs">(1737)</text>
<text x="1003.6" y="239.8" font-size="12.8" font-weight="bold" fill="#000" textLength="34.4" lengthAdjust="spacingAndGlyphs">Rsr<tspan font-family="Liberation Mono" font-size="12.2">II</tspan></text>
<text x="1048.2" y="255.1" font-size="11.4" fill="#111" textLength="36.6" lengthAdjust="spacingAndGlyphs">(1740)</text>
<text x="1009.7" y="254.8" font-size="12.8" font-weight="bold" fill="#000" textLength="29.3" lengthAdjust="spacingAndGlyphs">Drd<tspan font-family="Liberation Mono" font-size="12.2">I</tspan></text>
<text x="1115.1" y="278.1" font-size="11.4" fill="#111" textLength="36.9" lengthAdjust="spacingAndGlyphs">(1793)</text>
<text x="1021.3" y="277.8" font-size="12.8" font-weight="bold" fill="#000" textLength="85.1" lengthAdjust="spacingAndGlyphs">Mfl<tspan font-family="Liberation Mono" font-size="12.2">I</tspan>* - BstY<tspan font-family="Liberation Mono" font-size="12.2">I</tspan></text>
<text x="1091.2" y="293.1" font-size="11.4" fill="#111" textLength="36.9" lengthAdjust="spacingAndGlyphs">(1796)</text>
<text x="1027.4" y="292.8" font-size="12.8" font-weight="bold" fill="#000" textLength="54.7" lengthAdjust="spacingAndGlyphs">EcoP15<tspan font-family="Liberation Mono" font-size="12.2">I</tspan></text>
<text x="1084.7" y="307.9" font-size="11.4" fill="#111" textLength="37.3" lengthAdjust="spacingAndGlyphs">(1820)</text>
<text x="1033.4" y="307.6" font-size="12.8" font-weight="bold" fill="#000" textLength="42.6" lengthAdjust="spacingAndGlyphs">Dra<tspan font-family="Liberation Mono" font-size="12.2">III</tspan></text>
<text x="1109.8" y="329.8" font-size="11.4" fill="#111" textLength="37.1" lengthAdjust="spacingAndGlyphs">(1885)</text>
<text x="1051.7" y="329.5" font-size="12.8" font-weight="bold" fill="#000" textLength="49.0" lengthAdjust="spacingAndGlyphs">Hind<tspan font-family="Liberation Mono" font-size="12.2">III</tspan></text>
<text x="1114.5" y="352.5" font-size="11.4" fill="#111" textLength="36.5" lengthAdjust="spacingAndGlyphs">(1951)</text>
<text x="1072.5" y="352.2" font-size="12.8" font-weight="bold" fill="#000" textLength="32.9" lengthAdjust="spacingAndGlyphs">Bmr<tspan font-family="Liberation Mono" font-size="12.2">I</tspan></text>
<text x="1143.3" y="397.6" font-size="11.4" fill="#111" textLength="36.6" lengthAdjust="spacingAndGlyphs">(2058)</text>
<text x="1110.4" y="397.3" font-size="12.8" font-weight="bold" font-style="italic" fill="#000" textLength="23.7" lengthAdjust="spacingAndGlyphs">End</text>
<rect x="338.50" y="289.50" width="132.00" height="14.00" fill="#a6d8a6" stroke="#1d9a1d" stroke-width="1" rx="7.0"/>
<text x="341.4" y="299.9" font-size="12.3" fill="#111" textLength="125.8" lengthAdjust="spacingAndGlyphs">FRT site BBa_J61020</text>
<rect x="314.50" y="364.50" width="129.00" height="13.00" fill="#dcbcf5" stroke="#a324ee" stroke-width="1" rx="6.5"/>
<text x="317.2" y="374.9" font-size="12.3" fill="#111" textLength="124.0" lengthAdjust="spacingAndGlyphs">primer binding site F</text>
<rect x="615.50" y="244.50" width="122.00" height="13.00" fill="#ffffff" stroke="#a0a0a0" stroke-width="1" rx="6.5"/>
<text x="618.5" y="254.6" font-size="12.3" fill="#111" textLength="115.8" lengthAdjust="spacingAndGlyphs">P22 late terminator</text>
<rect x="587.50" y="304.50" width="132.00" height="14.00" fill="#a6d8a6" stroke="#1d9a1d" stroke-width="1" rx="7.0"/>
<text x="590.4" y="314.9" font-size="12.3" fill="#111" textLength="125.6" lengthAdjust="spacingAndGlyphs">FRT site BBa_J61020</text>
<rect x="783.50" y="210.50" width="89.00" height="13.00" fill="#a6d8a6" stroke="#1d9a1d" stroke-width="1" rx="6.5"/>
<text x="786.6" y="220.6" font-size="12.3" fill="#111" textLength="82.5" lengthAdjust="spacingAndGlyphs">miscellaneous</text>
<rect x="807.50" y="285.50" width="109.00" height="13.00" fill="#ffffff" stroke="#a0a0a0" stroke-width="1" rx="6.5"/>
<text x="810.5" y="295.5" font-size="12.3" fill="#111" textLength="102.8" lengthAdjust="spacingAndGlyphs">regulatory region</text>
<rect x="813.50" y="304.50" width="114.00" height="13.00" fill="#ffffff" stroke="#a0a0a0" stroke-width="1" rx="6.5"/>
<text x="816.6" y="314.6" font-size="12.3" fill="#111" textLength="108.2" lengthAdjust="spacingAndGlyphs">RBS (BBa_B0034)</text>
<rect x="1101.50" y="364.50" width="131.00" height="13.00" fill="#dcbcf5" stroke="#a324ee" stroke-width="1" rx="6.5"/>
<text x="1104.4" y="374.9" font-size="12.3" fill="#111" textLength="125.2" lengthAdjust="spacingAndGlyphs">primer binding site R</text>
<rect x="390.00" y="417.00" width="768.00" height="45.00" fill="#feeec5" stroke="none" stroke-width="1" rx="0"/>
<polygon points="439.00,426.00 711.00,426.00 711.00,424.30 719.00,429.00 711.00,433.80 711.00,432.00 439.00,432.00" fill="#a00000" stroke="none" stroke-width="1"/>
<rect x="440.00" y="427.00" width="1.20" height="4.00" fill="#feeec5" stroke="none" stroke-width="1" rx="0"/>
<line x1="704.30" y1="422.00" x2="704.30" y2="426.00" stroke="#a00000" stroke-width="1"/>
<line x1="712.30" y1="422.00" x2="712.30" y2="426.00" stroke="#a00000" stroke-width="1"/>
<line x1="716.50" y1="422.00" x2="716.50" y2="426.00" stroke="#a00000" stroke-width="1"/>
<polygon points="1059.00,426.00 746.00,426.00 746.00,423.80 738.20,429.00 746.00,434.20 746.00,432.00 1059.00,432.00" fill="#a00000" stroke="none" stroke-width="1"/>
<polygon points="745.00,427.20 740.50,429.00 745.00,431.00" fill="#feeec5" stroke="none" stroke-width="1"/>
<line x1="743.60" y1="422.00" x2="743.60" y2="426.00" stroke="#a00000" stroke-width="1"/>
<path d="M774.5,439.5 H398 V436.8 L390.5,442 L398,447.3 V444.7 H774.5 Z" fill="none" stroke="#a00000" stroke-width="1.1"/>
<rect x="749.00" y="439.50" width="7.00" height="5.20" fill="#a00000" stroke="none" stroke-width="1" rx="0"/>
<path d="M851.5,439.5 H1149 V436.8 L1157,442 L1149,447.3 V444.7 H851.5 Z" fill="none" stroke="#a00000" stroke-width="1.1"/>
<rect x="1094.00" y="439.50" width="14.00" height="5.20" fill="#a00000" stroke="none" stroke-width="1" rx="0"/>
<path d="M390.5,452.5 H766 V450 L774,455 L766,460 V457.5 H390.5 Z" fill="none" stroke="#a00000" stroke-width="1.1"/>
<rect x="749.00" y="452.50" width="7.00" height="5.00" fill="#a00000" stroke="none" stroke-width="1" rx="0"/>
<path d="M851.5,452.5 H1149 V450 L1157,455 L1149,460 V457.5 H851.5 Z" fill="none" stroke="#3a7bd5" stroke-width="1.1"/>
<rect x="1094.00" y="452.50" width="14.00" height="5.00" fill="#3a7bd5" stroke="none" stroke-width="1" rx="0"/>
<rect x="439.00" y="479.00" width="669.50" height="2.70" fill="#1a1a1a" stroke="none" stroke-width="1" rx="0"/>
<rect x="439.00" y="483.20" width="669.50" height="2.70" fill="#1a1a1a" stroke="none" stroke-width="1" rx="0"/>
<rect x="599.80" y="486.00" width="2.00" height="6.80" fill="#1a1a1a" stroke="none" stroke-width="1" rx="0"/>
<text x="578.0" y="495.6" font-size="12" fill="#111" textLength="21.0" lengthAdjust="spacingAndGlyphs">500</text>
<rect x="763.10" y="486.00" width="2.00" height="6.80" fill="#1a1a1a" stroke="none" stroke-width="1" rx="0"/>
<text x="733.6" y="495.6" font-size="12" fill="#111" textLength="26.4" lengthAdjust="spacingAndGlyphs">1000</text>
<rect x="925.20" y="486.00" width="2.00" height="6.80" fill="#1a1a1a" stroke="none" stroke-width="1" rx="0"/>
<text x="896.0" y="495.6" font-size="12" fill="#111" textLength="26.5" lengthAdjust="spacingAndGlyphs">1500</text>
<rect x="1087.00" y="486.00" width="2.00" height="6.80" fill="#1a1a1a" stroke="none" stroke-width="1" rx="0"/>
<text x="1057.5" y="495.6" font-size="12" fill="#111" textLength="26.5" lengthAdjust="spacingAndGlyphs">2000</text>
<line x1="468.50" y1="478.00" x2="468.50" y2="499.00" stroke="#8c8c8c" stroke-width="1"/>
<line x1="442.50" y1="478.00" x2="442.50" y2="499.00" stroke="#8c8c8c" stroke-width="1"/>
<line x1="743.50" y1="478.00" x2="743.50" y2="499.00" stroke="#8c8c8c" stroke-width="1"/>
<line x1="729.50" y1="478.00" x2="729.50" y2="499.00" stroke="#8c8c8c" stroke-width="1"/>
<line x1="783.50" y1="478.00" x2="783.50" y2="499.00" stroke="#8c8c8c" stroke-width="1"/>
<line x1="802.50" y1="478.00" x2="802.50" y2="499.00" stroke="#8c8c8c" stroke-width="1"/>
<line x1="813.50" y1="478.00" x2="813.50" y2="499.00" stroke="#8c8c8c" stroke-width="1"/>
<line x1="1104.50" y1="478.00" x2="1104.50" y2="499.00" stroke="#8c8c8c" stroke-width="1"/>
<line x1="753.50" y1="478.00" x2="753.50" y2="499.00" stroke="#8c8c8c" stroke-width="1"/>
<polygon points="439.30,503.20 444.50,503.20 443.00,511.30 444.50,519.40 439.30,519.40" fill="#a020f0" stroke="#333" stroke-width="1"/>
<polygon points="444.90,511.30 454.40,499.00 454.40,503.20 462.00,503.20 462.00,519.40 454.40,519.40 454.40,524.50" fill="#ffffff" stroke="#6e6e6e" stroke-width="1"/>
<polygon points="463.60,508.80 469.40,499.00 469.40,503.20 474.60,503.20 474.60,519.40 469.40,519.40 469.40,524.50 463.60,513.80" fill="#007a00" stroke="#333" stroke-width="1"/>
<polygon points="475.20,511.30 497.50,499.00 497.50,503.20 689.70,503.20 689.70,519.40 497.50,519.40 497.50,524.50" fill="#ccfccc" stroke="#6e6e6e" stroke-width="1"/>
<ellipse cx="692.5" cy="511.8" rx="1.4" ry="12.5" fill="none" stroke="#888" stroke-width="1"/>
<polygon points="723.20,508.60 729.40,499.00 729.40,503.20 734.60,503.20 734.60,519.40 729.40,519.40 729.40,524.50 723.20,513.60" fill="#007a00" stroke="#333" stroke-width="1"/>
<rect x="736.10" y="503.20" width="14.30" height="16.20" fill="#fff" stroke="#6e6e6e" stroke-width="1" rx="0"/>
<path d="M750.6,503.2 H753.5 Q756.5,511.3 753.5,519.4 H750.6 Z" fill="#a020f0" stroke="#333" stroke-width="1"/>
<rect x="756.30" y="503.20" width="25.30" height="16.20" fill="#fff" stroke="#6e6e6e" stroke-width="1" rx="0"/>
<rect x="781.60" y="503.20" width="4.10" height="16.20" fill="#008a00" stroke="#333" stroke-width="1" rx="0"/>
<rect x="797.20" y="503.20" width="11.50" height="16.20" fill="#fff" stroke="#6e6e6e" stroke-width="1" rx="0"/>
<rect x="811.10" y="503.20" width="4.50" height="16.20" fill="#fff" stroke="#6e6e6e" stroke-width="1" rx="0"/>
<polygon points="816.50,503.20 1029.60,503.20 1029.60,499.00 1048.90,511.30 1029.60,524.50 1029.60,519.40 816.50,519.40" fill="#ffff00" stroke="#8a8a55" stroke-width="1"/>
<line x1="816.80" y1="503.20" x2="816.80" y2="519.40" stroke="#555" stroke-width="1.5"/>
<text x="908.4" y="514.9" font-size="12.5" fill="#111" textLength="36.1" lengthAdjust="spacingAndGlyphs">SYFP2</text>
<rect x="1058.00" y="503.20" width="34.70" height="16.20" fill="#fff" stroke="#6e6e6e" stroke-width="1" rx="0"/>
<path d="M1104.5,499 L1108.6,503.2 V519.4 L1104.5,524.5 Q1098.5,511.8 1104.5,499 Z" fill="#a020f0" stroke="#333" stroke-width="0.9"/>
<line x1="753.50" y1="499.00" x2="753.50" y2="524.50" stroke="#333" stroke-width="1"/>
<line x1="443.50" y1="499.00" x2="443.50" y2="524.50" stroke="#333" stroke-width="1"/>
<line x1="1104.50" y1="499.00" x2="1104.50" y2="524.50" stroke="#333" stroke-width="1"/>
<text x="480.2" y="537.6" font-size="13" fill="#111" textLength="204.4" lengthAdjust="spacingAndGlyphs">chloramphenicol acetyltransferase</text>
<text x="691.4" y="537.6" font-size="13" fill="#111" textLength="23.7" lengthAdjust="spacingAndGlyphs">RBS</text>
<line x1="453.50" y1="532.60" x2="453.50" y2="542.50" stroke="#8a8a8a" stroke-width="1"/>
<text x="453.1" y="553.5" font-size="13" fill="#111" textLength="250.2" lengthAdjust="spacingAndGlyphs">terminator from Vibrio fischeri lux operon</text>
<line x1="768.50" y1="527.40" x2="768.50" y2="542.30" stroke="#8a8a8a" stroke-width="1"/>
<text x="768.1" y="554.2" font-size="13" fill="#111" textLength="167.3" lengthAdjust="spacingAndGlyphs">T3 terminator (BBa_B0055)</text>
<line x1="1075.50" y1="527.60" x2="1075.50" y2="542.70" stroke="#8a8a8a" stroke-width="1"/>
<text x="1035.2" y="553.9" font-size="13" fill="#111" textLength="78.1" lengthAdjust="spacingAndGlyphs">terminator t1</text>
<rect x="797.30" y="568.50" width="2.40" height="16.00" fill="#fff" stroke="#777" stroke-width="0.9" rx="0"/>
<rect x="804.30" y="568.50" width="2.40" height="16.00" fill="#fff" stroke="#777" stroke-width="0.9" rx="0"/>
<text x="778.7" y="602.5" font-size="13" fill="#111" textLength="19.5" lengthAdjust="spacingAndGlyphs">-35</text>
<line x1="805.50" y1="592.40" x2="805.50" y2="607.20" stroke="#8a8a8a" stroke-width="1"/>
<text x="795.9" y="618.9" font-size="13" fill="#111" textLength="19.0" lengthAdjust="spacingAndGlyphs">-10</text>
<text x="679.4" y="669.7" font-size="14.2" font-weight="bold" fill="#000" textLength="189.5" lengthAdjust="spacingAndGlyphs">KM018300 - SYFP2_CAT</text>
<text x="752.7" y="683.7" font-size="11.2" fill="#111" textLength="44.4" lengthAdjust="spacingAndGlyphs">2058 bp</text>
<path d="M280.5,696 V675.5 H493 a5.5,5.5 0 0 1 5.5,5.5 V696" fill="#ebebeb" stroke="#c2c2c2" stroke-width="1"/>
<text x="289.3" y="690.0" font-size="11.5" fill="#111" textLength="101.9" lengthAdjust="spacingAndGlyphs">Unique 6+ Cutters</text>
<text x="402.4" y="690.0" font-size="11.5" fill="#1a6fd8" textLength="88.0" lengthAdjust="spacingAndGlyphs">(Nonredundant)</text>
</svg>
</body></html>
